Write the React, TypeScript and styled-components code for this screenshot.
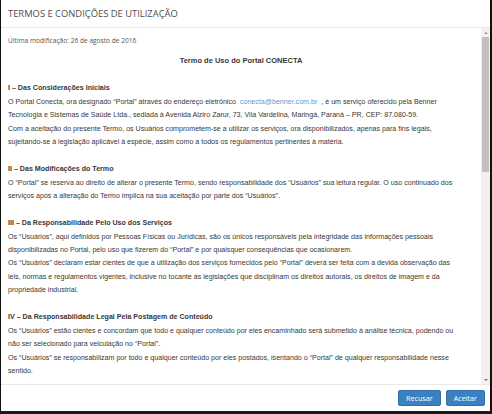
import React from "react";
import styled, { createGlobalStyle } from "styled-components";

const Global = createGlobalStyle`
  html, body { margin: 0; padding: 0; background: #fff; }
  * { box-sizing: border-box; }
`;

const Modal = styled.div`
  width: 492px;
  height: 414px;
  display: flex;
  flex-direction: column;
  background: #fff;
  border-left: 1px solid #111;
  border-right: 2px solid #111;
  border-bottom: 3px solid #1a1a1a;
  overflow: hidden;
`;

const Header = styled.div`
  height: 28px;
  flex: none;
  display: flex;
  align-items: center;
  padding: 0 7px 1px;
  border-bottom: 1px solid #e8e8e8;
  font-family: "Open Sans", sans-serif;
  font-size: 9.4px;
  color: #4d4d4d;
`;

const Body = styled.div`
  flex: 1;
  display: flex;
  min-height: 0;
`;

const Content = styled.div`
  flex: 1;
  overflow: hidden;
  padding: 5.5px 7px 0;
  font-family: "Liberation Sans", Arial, sans-serif;
  font-size: 7.1px;
  line-height: 13.4px;
  color: #383838;
  white-space: nowrap;
`;

const Updated = styled.div`
  font-family: "Open Sans", sans-serif;
  font-size: 6.6px;
  color: #555;
`;

const DocTitle = styled.div`
  margin: 7.4px 0 14.6px;
  text-align: center;
  font-weight: bold;
  font-size: 7.5px;
`;

const Section = styled.div`
  margin-bottom: 13.8px;
`;

const Heading = styled.div`
  font-weight: bold;
`;

const Link = styled.a`
  color: #5b9bd1;
  text-decoration: none;
  padding: 0 2px;
`;

const Scrollbar = styled.div`
  width: 9px;
  flex: none;
  display: flex;
  flex-direction: column;
  background: #f1f1f1;
`;

const Arrow = styled.div<{ $down?: boolean }>`
  height: 9px;
  flex: none;
  display: flex;
  align-items: center;
  justify-content: center;
  &::before {
    content: "";
    border-left: 2px solid transparent;
    border-right: 2px solid transparent;
    ${(p) => (p.$down ? "border-top: 2px solid #777;" : "border-bottom: 2px solid #999;")}
  }
`;

const Track = styled.div`
  flex: 1;
  padding: 0 1px;
`;

const Thumb = styled.div`
  height: 135px;
  background: #c1c1c1;
`;

const Footer = styled.div`
  height: 27px;
  flex: none;
  display: flex;
  align-items: center;
  justify-content: flex-end;
  gap: 5px;
  padding: 0 5px 1px;
  border-top: 1px solid #e8e8e8;
`;

const Button = styled.button<{ $pad?: number }>`
  height: 16px;
  padding: 0 ${(p) => p.$pad ?? 6}px;
  border: 1px solid #2f6fab;
  border-radius: 2px;
  background: #3c80c0;
  color: #fff;
  font-family: "Open Sans", sans-serif;
  font-size: 7.2px;
  line-height: 14px;
  cursor: pointer;
`;

const sections: { title: string; lines: React.ReactNode[] }[] = [
  {
    title: "I – Das Considerações Iniciais",
    lines: [
      <>
        O Portal Conecta, ora designado “Portal” através do endereço eletrônico{" "}
        <Link href="#">conecta@benner.com.br</Link> , é um serviço oferecido pela Benner
      </>,
      "Tecnologia e Sistemas de Saúde Ltda., sediada à Avenida Alziro Zarur, 73, Vila Vardelina, Maringá, Paraná – PR, CEP: 87.080-59.",
      "Com a aceitação do presente Termo, os Usuários comprometem-se a utilizar os serviços, ora disponibilizados, apenas para fins legais,",
      "sujeitando-se à legislação aplicável à espécie, assim como a todos os regulamentos pertinentes à matéria.",
    ],
  },
  {
    title: "II – Das Modificações do Termo",
    lines: [
      "O “Portal” se reserva ao direito de alterar o presente Termo, sendo responsabilidade dos “Usuários” sua leitura regular. O uso continuado dos",
      "serviços após a alteração do Termo implica na sua aceitação por parte dos “Usuários”.",
    ],
  },
  {
    title: "III – Da Responsabilidade Pelo Uso dos Serviços",
    lines: [
      "Os “Usuários”, aqui definidos por Pessoas Físicas ou Jurídicas, são os únicos responsáveis pela integridade das informações pessoais",
      "disponibilizadas no Portal, pelo uso que fizerem do “Portal” e por quaisquer consequências que ocasionarem.",
      "Os “Usuários” declaram estar cientes de que a utilização dos serviços fornecidos pelo “Portal” deverá ser feita com a devida observação das",
      "leis, normas e regulamentos vigentes, inclusive no tocante às legislações que disciplinam os direitos autorais, os direitos de imagem e da",
      "propriedade industrial.",
    ],
  },
  {
    title: "IV – Da Responsabilidade Legal Pela Postagem de Conteúdo",
    lines: [
      "Os “Usuários” estão cientes e concordam que todo e qualquer conteúdo por eles encaminhado será submetido à análise técnica, podendo ou",
      "não ser selecionado para veiculação no “Portal”.",
      "Os “Usuários” se responsabilizam por todo e qualquer conteúdo por eles postados, isentando o “Portal” de qualquer responsabilidade nesse",
      "sentido.",
    ],
  },
];

export default function App() {
  return (
    <>
      <Global />
      <Modal>
        <Header>TERMOS E CONDIÇÕES DE UTILIZAÇÃO</Header>
        <Body>
          <Content>
            <Updated>Última modificação: 26 de agosto de 2016</Updated>
            <DocTitle>Termo de Uso do Portal CONECTA</DocTitle>
            {sections.map((s) => (
              <Section key={s.title}>
                <Heading>{s.title}</Heading>
                {s.lines.map((l, i) => (
                  <div key={i}>{l}</div>
                ))}
              </Section>
            ))}
          </Content>
          <Scrollbar>
            <Arrow />
            <Track>
              <Thumb />
            </Track>
            <Arrow $down />
          </Scrollbar>
        </Body>
        <Footer>
          <Button $pad={7}>Recusar</Button>
          <Button $pad={7}>Aceitar</Button>
        </Footer>
      </Modal>
    </>
  );
}
